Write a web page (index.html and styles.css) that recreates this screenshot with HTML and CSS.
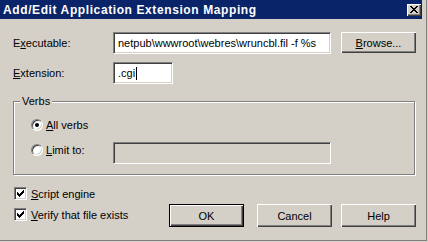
FILE: index.html
```html
<!DOCTYPE html>
<html>
<head>
<meta charset="utf-8">
<link rel="stylesheet" href="styles.css">
</head>
<body>
<div class="window">
  <div class="titlebar">
    <span class="title">Add/Edit Application Extension Mapping</span>
    <span class="close"><svg width="8" height="7" viewBox="0 0 8 7" shape-rendering="crispEdges"><path d="M0 0h2v1h-2z M1 1h2v1h-2z M2 2h4v1h-4z M3 3h2v1h-2z M2 4h4v1h-4z M1 5h2v1h-2z M0 6h2v1h-2z M6 0h2v1h-2z M5 1h2v1h-2z M5 5h2v1h-2z M6 6h2v1h-2z" fill="#000"/></svg></span>
  </div>
  <div class="client">
    <div class="row row-exec">
      <span class="lbl">E<u>x</u>ecutable:</span>
      <div class="field field-exec">netpub\wwwroot\webres\wruncbl.fil -f %s</div>
      <div class="btn btn-browse"><span><u>B</u>rowse...</span></div>
    </div>
    <div class="row row-ext">
      <span class="lbl"><u>E</u>xtension:</span>
      <div class="field field-ext">.cgi<span class="caret"></span></div>
    </div>
    <div class="group">
      <span class="legend">Verbs</span>
      <div class="opt">
        <div class="opt-head"><span class="radio checked"></span><span class="opt-label"><u>A</u>ll verbs</span></div>
      </div>
      <div class="opt opt-limit">
        <div class="opt-head"><span class="radio"></span><span class="opt-label"><u>L</u>imit to:</span></div>
        <div class="field field-disabled"></div>
      </div>
    </div>
    <div class="bottom">
      <div class="checks">
        <div class="check-row"><span class="checkbox"><svg width="7" height="7" viewBox="0 0 7 7" shape-rendering="crispEdges"><path d="M0 2h1v3h-1z M1 3h1v3h-1z M2 4h1v3h-1z M3 3h1v3h-1z M4 2h1v3h-1z M5 1h1v3h-1z M6 0h1v3h-1z" fill="#000"/></svg></span><span><u>S</u>cript engine</span></div>
        <div class="check-row"><span class="checkbox"><svg width="7" height="7" viewBox="0 0 7 7" shape-rendering="crispEdges"><path d="M0 2h1v3h-1z M1 3h1v3h-1z M2 4h1v3h-1z M3 3h1v3h-1z M4 2h1v3h-1z M5 1h1v3h-1z M6 0h1v3h-1z" fill="#000"/></svg></span><span><u>V</u>erify that file exists</span></div>
      </div>
      <div class="buttons">
        <div class="btn btn-default btn-ok">OK</div>
        <div class="btn btn-cancel">Cancel</div>
        <div class="btn">Help</div>
      </div>
    </div>
  </div>
</div>
</body>
</html>
```
FILE: styles.css
```css
body {
  margin: 0;
  background: #d4d0c8;
  font-family: "Liberation Sans", Arial, sans-serif;
  font-size: 11px;
  color: #000;
}
u { text-underline-offset: 1px; }
.window {
  width: 426px;
  height: 240px;
  border-right: 1px solid #808080;
  border-bottom: 1px solid #808080;
  display: flex;
  flex-direction: column;
}
.titlebar {
  width: 422px;
  height: 19px;
  flex-shrink: 0;
  background: #0a246a;
  display: flex;
  align-items: center;
  justify-content: space-between;
}
.title {
  color: #fff;
  font-weight: bold;
  font-size: 12px;
  letter-spacing: 0.6px;
  padding-left: 3px;
  white-space: nowrap;
}
.close {
  box-sizing: border-box;
  width: 14px;
  height: 12px;
  margin-right: 1px;
  background: #d4d0c8;
  box-shadow: inset 1px 1px #fff, inset -1px -1px #404040, inset -2px -2px #808080;
  display: flex;
  align-items: center;
  justify-content: center;
}
.close svg { margin-top: -1px; }
.client {
  padding: 13px 10px 0 13px;
}
.row {
  display: flex;
  align-items: center;
}
.lbl { width: 100px; flex-shrink: 0; }
.field {
  box-sizing: border-box;
  height: 22px;
  background: #fff;
  border: 1px solid;
  border-color: #808080 #fff #fff #808080;
  box-shadow: inset 1px 1px #404040, inset -1px -1px #d4d0c8;
  padding-left: 4px;
  display: flex;
  align-items: center;
  white-space: nowrap;
  overflow: hidden;
  flex-shrink: 0;
}
.field-exec { width: 218px; }
.field-ext { width: 60px; }
.caret {
  display: inline-block;
  width: 1px;
  height: 13px;
  background: #000;
  margin-left: 1px;
}
.btn {
  box-sizing: border-box;
  width: 75px;
  height: 23px;
  display: flex;
  align-items: center;
  justify-content: center;
  box-shadow: inset 1px 1px #fff, inset -1px -1px #404040, inset -2px -2px #808080;
  flex-shrink: 0;
}
.btn-browse {
  height: 21px;
  margin-left: 10px;
  align-self: flex-start;
}
.row-ext { margin-top: 8px; }
.group {
  position: relative;
  box-sizing: border-box;
  width: 402px;
  height: 74px;
  margin-top: 17px;
  border: 1px solid #808080;
  box-shadow: 1px 1px 0 #fff, inset 1px 1px 0 #fff;
  padding: 17px 0 0 17px;
}
.legend {
  position: absolute;
  top: -7px;
  left: 6px;
  padding: 0 2px;
  line-height: 13px;
  background: #d4d0c8;
}
.opt { display: flex; align-items: flex-start; }
.opt-head {
  display: flex;
  align-items: center;
  height: 12px;
  width: 82px;
}
.opt-limit { margin-top: 11px; }
.opt-limit .opt-head { margin-top: 2px; }
.radio {
  box-sizing: border-box;
  position: relative;
  width: 12px;
  height: 12px;
  flex-shrink: 0;
  border-radius: 50%;
  border: 1px solid;
  border-color: #808080 #fff #fff #808080;
  background: #fff;
  box-shadow: inset 1px 1px #404040, inset -1px -1px #d4d0c8;
}
.radio.checked::after {
  content: "";
  position: absolute;
  left: 3px;
  top: 3px;
  width: 4px;
  height: 4px;
  border-radius: 50%;
  background: #000;
}
.opt-label { margin-left: 3px; white-space: nowrap; }
.field-disabled { width: 218px; background: #d4d0c8; }
.bottom {
  display: flex;
  margin-top: 12px;
}
.checks {
  display: flex;
  flex-direction: column;
  gap: 8px;
  margin-left: 1px;
}
.check-row {
  display: flex;
  align-items: center;
  height: 13px;
  gap: 4px;
  white-space: nowrap;
}
.checkbox {
  box-sizing: border-box;
  width: 13px;
  height: 13px;
  border: 1px solid;
  border-color: #808080 #fff #fff #808080;
  box-shadow: inset 1px 1px #404040, inset -1px -1px #d4d0c8;
  background: #fff;
  display: flex;
  align-items: center;
  justify-content: center;
}
.buttons {
  display: flex;
  margin-left: auto;
  margin-top: 17px;
}
.btn-default { border: 1px solid #000; }
.btn-ok { margin-right: 13px; }
.btn-cancel { margin-right: 9px; }
```
